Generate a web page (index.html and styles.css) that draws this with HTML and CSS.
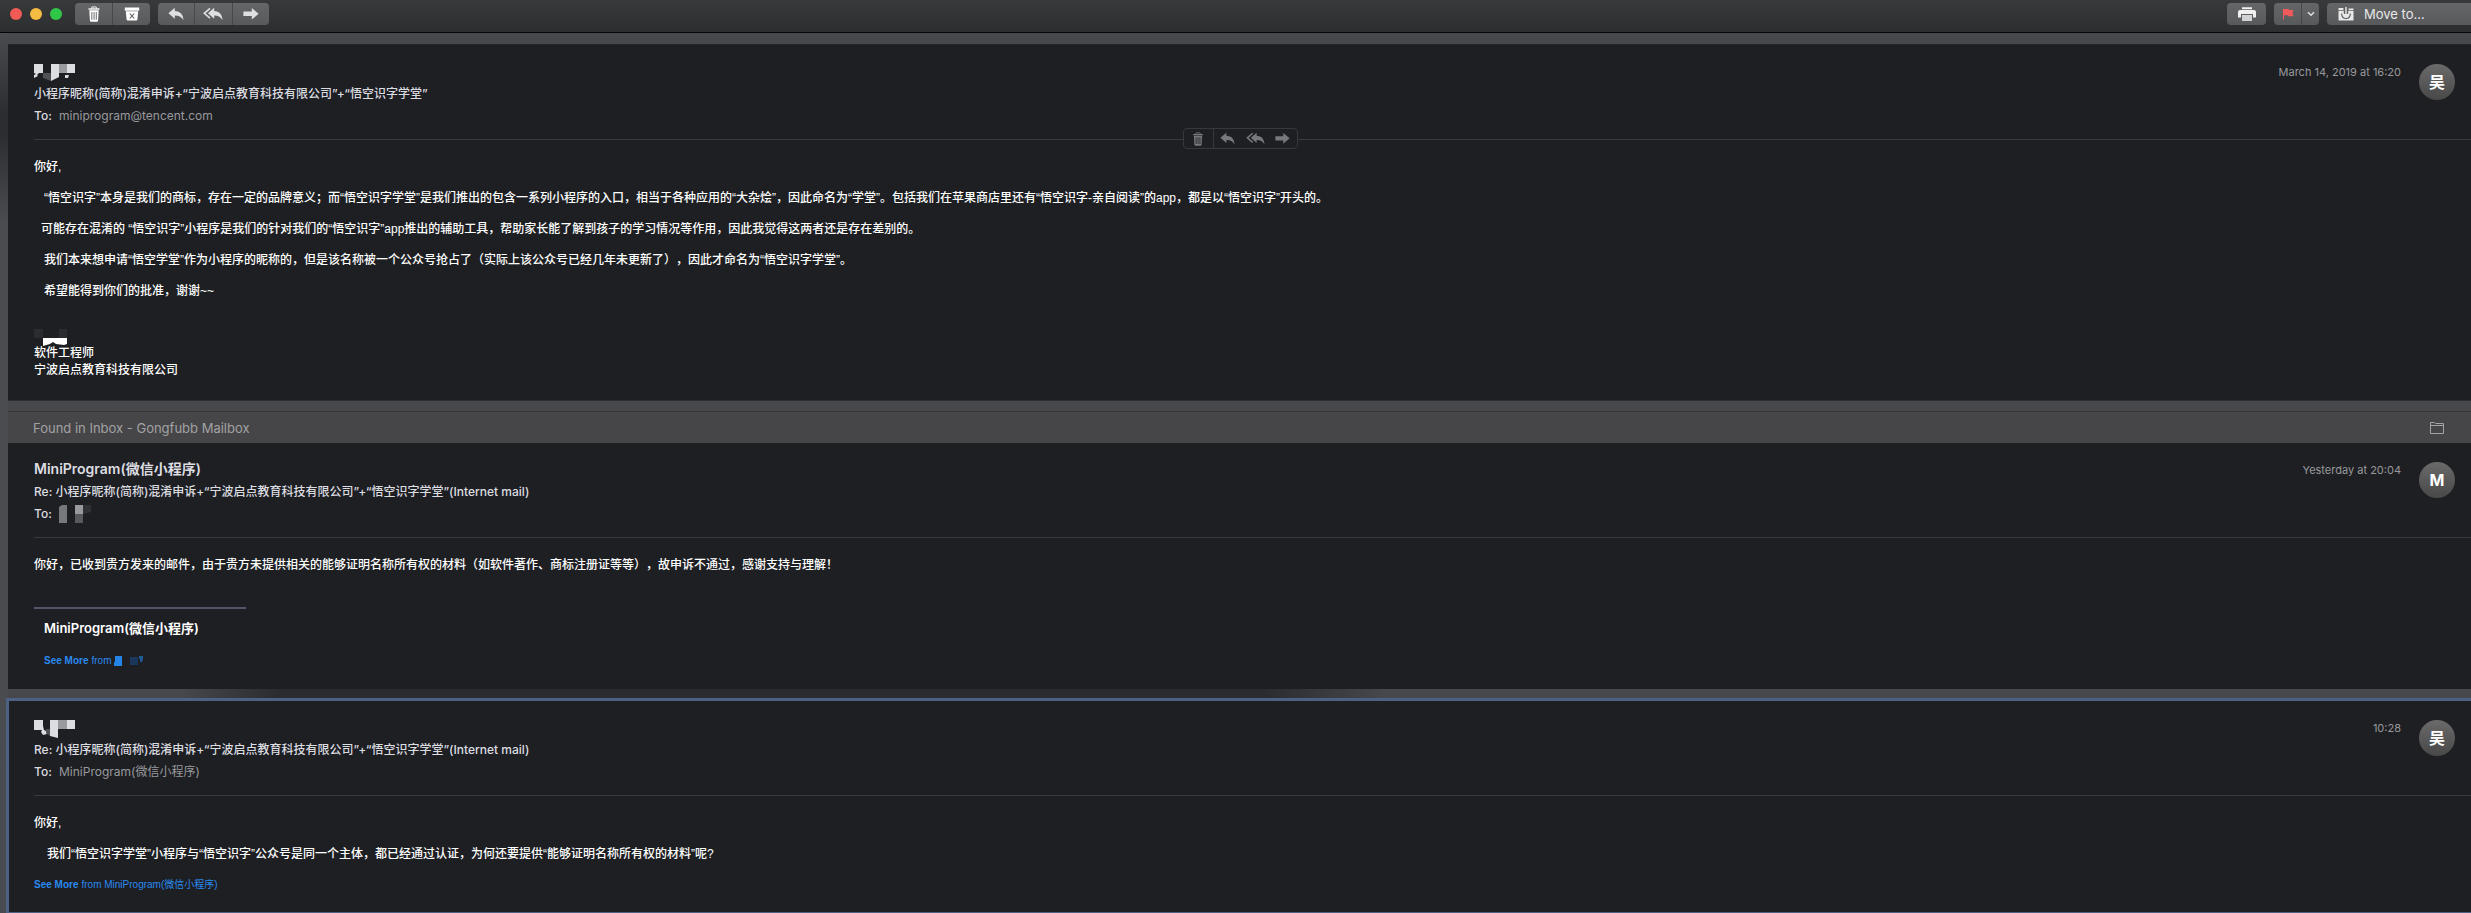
FILE: index.html
```html
<!DOCTYPE html>
<html lang="zh-CN">
<head>
  <meta charset="UTF-8">
  <meta name="viewport" content="width=device-width, initial-scale=1.0">
  <title>Mail</title>
  <link rel="stylesheet" href="styles.css">
</head>
<body>
  <!-- shared icons -->
  <svg class="icon-defs" aria-hidden="true">
    <symbol id="icon-trash" viewBox="0 0 16 16">
      <path d="M5.5 2.5V1.6Q5.5 1 6.1 1h3.8q.6 0 .6.6v.9" fill="none" stroke="currentColor"/>
      <path d="M2.5 2.3h11v1.4h-11z"/>
      <path fill-rule="evenodd" d="M3.3 4.3h9.4l-.6 10.2q-.1 1.2-1.3 1.2H5.200q-1.200 0-1.300-1.200zM5.400 6v7.700h.9V6zM7.600 6v7.700h.9V6zM9.800 6v7.700h.9V6z"/>
    </symbol>
    <symbol id="icon-junk" viewBox="0 0 16 16">
      <path d="M.8 1.500h14.400v3.200H.8z"/>
      <path d="M1.800 5.300h12.400l-.8 8.200q-.1 1-1.100 1H3.700q-1 0-1.100-1z"/>
      <path d="M5.800 7.500l4.400 5M10.200 7.500l-4.400 5" fill="none" stroke="#58595b" stroke-width="1.100"/>
    </symbol>
    <symbol id="icon-reply" viewBox="0 0 16 16">
      <path d="M6.800 1.800v3.200c5.400.3 8.300 3.200 8.700 9.300-1.700-3.200-4.300-4.600-8.700-4.700v3.200L.4 7.300z"/>
    </symbol>
    <symbol id="icon-reply-all" viewBox="0 0 20 16">
      <path d="M11.200 1.800v3.200c5.200.3 7.900 3.200 8.400 9.300-1.700-3.200-4.200-4.600-8.400-4.700v3.200L5 7.300z"/>
      <path d="M7 2.400L1.300 7.300 7 12.200" fill="none" stroke="currentColor" stroke-width="1.600"/>
    </symbol>
    <symbol id="icon-forward" viewBox="0 0 16 16">
      <path d="M.4 5.500h8.400V2l6.800 5.800-6.800 5.800v-3.600H.4z"/>
    </symbol>
  </svg>

  <header class="toolbar">
    <div class="lights">
      <span class="light red"></span>
      <span class="light yellow"></span>
      <span class="light green"></span>
    </div>
    <div class="btn-group delete-group">
      <button type="button" aria-label="Delete"><svg width="16" height="16"><use href="#icon-trash"/></svg></button>
      <button type="button" aria-label="Junk"><svg width="16" height="16"><use href="#icon-junk"/></svg></button>
    </div>
    <div class="btn-group reply-group">
      <button type="button" aria-label="Reply"><svg width="16" height="16"><use href="#icon-reply"/></svg></button>
      <button type="button" aria-label="Reply all"><svg width="20" height="16"><use href="#icon-reply-all"/></svg></button>
      <button type="button" aria-label="Forward"><svg width="16" height="16"><use href="#icon-forward"/></svg></button>
    </div>
    <div class="btn-group print-group">
      <button type="button" aria-label="Print">
        <svg width="18" height="16" viewBox="0 0 18 16">
          <path d="M4 1.200h10v2H4zM2 4h14q2 0 2 2v5.500h-3V8H3v3.500H0V6q0-2 2-2z"/>
          <path d="M4 9h10v6H4z" opacity=".8"/>
        </svg>
      </button>
    </div>
    <div class="btn-group flag-group">
      <button type="button" aria-label="Flag">
        <svg class="flag" width="12" height="12" viewBox="0 0 12 12">
          <path d="M1 1h5.500l.8 1H11.500L10.500 5l1 3.200H6.500l-.8-1H2V11.500H1z"/>
        </svg>
      </button>
      <button type="button" class="flag-menu" aria-label="Flag colours">
        <svg width="8" height="6" viewBox="0 0 8 6"><path d="M1 1.200l3 3 3-3" fill="none" stroke="currentColor" stroke-width="1.500"/></svg>
      </button>
    </div>
    <button type="button" class="move-to">
      <svg width="16" height="14" viewBox="0 0 16 14">
        <path d="M.5 1h5v2h-5zM10.500 1.500h5V3h-5zM.5 3.800h15V13.500H.5z"/>
        <path d="M5.800 0h4.400v7h-4.400z" fill="#5f6062"/>
        <path d="M3.600 6.500q.2 5 4.400 5t4.400-5" fill="none" stroke="#5f6062" stroke-width="1.200"/>
        <path d="M8 0v9.500M5.200 6.800L8 9.800l2.800-3" fill="none" stroke="currentColor" stroke-width="1.400"/>
      </svg>
      Move to...
    </button>
  </header>

  <main class="thread">
    <article class="message first">
      <div class="message-head">
        <div class="info">
          <div class="name">
            <svg width="42" height="18" viewBox="0 0 42 18" aria-label="Hidden name">
              <path fill="#dcdde0" d="M0 0h9v9H5l-2 2 1 1-4 2v-3l2-1-2-1zM17 0h8v13l-8 4zM33 0h8v9h-8zM31 11h4l-1 3h-3z"/>
              <path fill="#999a9d" d="M25 0h8v9h-8z"/>
              <path fill="#505155" d="M9 9h8v8l-8-3z"/>
            </svg>
          </div>
          <div class="subject">小程序昵称(简称)混淆申诉+“宁波启点教育科技有限公司”+“悟空识字学堂”</div>
          <div class="to"><span>To:</span>miniprogram@tencent.com</div>
        </div>
        <time class="date">March 14, 2019 at 16:20</time>
        <div class="avatar">吴</div>
        <div class="quick-actions">
          <button type="button" aria-label="Delete"><svg width="14" height="14"><use href="#icon-trash"/></svg></button>
          <button type="button" aria-label="Reply"><svg width="15" height="15"><use href="#icon-reply"/></svg></button>
          <button type="button" aria-label="Reply all"><svg width="19" height="15"><use href="#icon-reply-all"/></svg></button>
          <button type="button" aria-label="Forward"><svg width="15" height="15"><use href="#icon-forward"/></svg></button>
        </div>
      </div>
      <div class="message-body">
        <p>你好,</p>
        <p class="indent">“悟空识字”本身是我们的商标，存在一定的品牌意义；而“悟空识字学堂”是我们推出的包含一系列小程序的入口，相当于各种应用的“大杂烩”，因此命名为“学堂”。包括我们在苹果商店里还有“悟空识字-亲自阅读”的app，都是以“悟空识字”开头的。</p>
        <p class="indent-small">可能存在混淆的 “悟空识字”小程序是我们的针对我们的“悟空识字”app推出的辅助工具，帮助家长能了解到孩子的学习情况等作用，因此我觉得这两者还是存在差别的。</p>
        <p class="indent">我们本来想申请“悟空学堂”作为小程序的昵称的，但是该名称被一个公众号抢占了（实际上该公众号已经几年未更新了），因此才命名为“悟空识字学堂”。</p>
        <p class="indent">希望能得到你们的批准，谢谢~~</p>
        <div class="signature">
          <svg width="36" height="18" viewBox="0 0 36 18" aria-label="Hidden name">
            <path fill="#2b2c30" d="M0 0h9v9H0zM25 0h8v9h-8z"/>
            <path fill="#fff" d="M9 9h24v6l-3 1-8-1-3-2-3 2-7 2z"/>
          </svg>
          <div>软件工程师</div>
          <div>宁波启点教育科技有限公司</div>
        </div>
      </div>
    </article>

    <section class="found">
      <div class="found-bar">
        <span>Found in Inbox - Gongfubb Mailbox</span>
        <svg width="16" height="14" viewBox="0 0 16 14">
          <path d="M1.500 12.500v-11h4l1 1h8v10zM1.500 4.500h13" fill="none" stroke="currentColor"/>
        </svg>
      </div>
      <article class="message">
        <div class="message-head">
          <div class="info">
            <div class="name">MiniProgram(微信小程序)</div>
            <div class="subject">Re: 小程序昵称(简称)混淆申诉+“宁波启点教育科技有限公司”+“悟空识字学堂”(Internet mail)</div>
            <div class="to"><span>To:</span>
              <svg width="34" height="18" viewBox="0 0 34 18" aria-label="Hidden address">
                <path fill="#77787b" d="M0 2l3-2h5v18H0z"/>
                <path fill="#98999c" d="M16 0h8v9h-8z"/>
                <path fill="#58595d" d="M16 9h8v9h-8z"/>
                <path fill="#303135" d="M24 0h8v7l-8 2z"/>
              </svg>
            </div>
          </div>
          <time class="date">Yesterday at 20:04</time>
          <div class="avatar">M</div>
        </div>
        <div class="message-body">
          <p>你好，已收到贵方发来的邮件，由于贵方未提供相关的能够证明名称所有权的材料（如软件著作、商标注册证等等），故申诉不通过，感谢支持与理解！</p>
          <hr class="sig-line">
          <div class="sig-name">MiniProgram(微信小程序)</div>
          <a class="see-more indent" href="#"><b>See More</b> from
            <svg width="30" height="10" viewBox="0 0 30 10" aria-label="Hidden name">
              <path fill="#2585e6" d="M1 0h7v10H0V7l1-2z"/>
              <path fill="#1b375c" d="M16 1h8v8h-8z"/>
              <path fill="#205a97" d="M25 0h4v3l-1 3h-2V3h-1z"/>
            </svg>
          </a>
        </div>
      </article>
    </section>

    <article class="message selected">
      <div class="message-head">
        <div class="info">
          <div class="name">
            <svg width="42" height="18" viewBox="0 0 42 18" aria-label="Hidden name">
              <path fill="#dcdde0" d="M0 0h9v6l1 4 2 1 1 3-4 1-2-3 1-2H0zM16 0h8v18l-8-2zM33 0h8v9h-8z"/>
              <path fill="#999a9d" d="M24 0h9v9h-9z"/>
              <path fill="#505155" d="M12 9h4v7l-4-3z"/>
            </svg>
          </div>
          <div class="subject">Re: 小程序昵称(简称)混淆申诉+“宁波启点教育科技有限公司”+“悟空识字学堂”(Internet mail)</div>
          <div class="to"><span>To:</span>MiniProgram(微信小程序)</div>
        </div>
        <time class="date">10:28</time>
        <div class="avatar">吴</div>
      </div>
      <div class="message-body">
        <p>你好,</p>
        <p class="indent-large">我们“悟空识字学堂”小程序与“悟空识字”公众号是同一个主体，都已经通过认证，为何还要提供“能够证明名称所有权的材料”呢?</p>
        <a class="see-more" href="#"><b>See More</b> from MiniProgram(微信小程序)</a>
      </div>
    </article>
  </main>
</body>
</html>
```
FILE: styles.css
```css
* {
  box-sizing: border-box;
}

body {
  margin: 0;
  min-height: 100vh;
  display: flex;
  flex-direction: column;
  font-family: Inter, 'Noto Sans CJK SC', sans-serif;
  font-size: 12px;
  text-spacing-trim: space-all;
  color: #dcdde0;
  background: #46474b;
  overflow: hidden;
}

svg {
  display: block;
  fill: currentColor;
}

button {
  margin: 0;
  padding: 0;
  border: none;
  background: none;
  font: inherit;
  color: inherit;
}

.icon-defs {
  display: none;
}

/* Toolbar */
.toolbar {
  display: flex;
  align-items: flex-start;
  height: 33px;
  padding: 3px 0 0 10px;
  background: linear-gradient(to bottom, #38393b, #2d2e30);
  border-bottom: 1px solid #050506;
  overflow: hidden;
}

.lights {
  display: flex;
  gap: 8px;
  padding-top: 5px;
}

.light {
  width: 12px;
  height: 12px;
  border-radius: 50%;
}

.red {
  background: #f25a56;
}

.yellow {
  background: #f6bc42;
}

.green {
  background: #30c748;
}

.btn-group,
.move-to {
  display: flex;
  height: 22px;
  border-radius: 4px;
  background: linear-gradient(to bottom, #656668, #58595b);
  color: #dedfe1;
}

.btn-group button {
  display: flex;
  align-items: center;
  justify-content: center;
  flex: 1;
}

.btn-group button + button {
  border-left: 1px solid #47484a;
}

.delete-group {
  width: 75px;
  margin-left: 13px;
  color: #fff;
}

.reply-group {
  width: 111px;
  margin-left: 8px;
}

.print-group {
  width: 39px;
  margin-left: auto;
  color: #f0f0f1;
}

.flag-group {
  width: 45px;
  margin-left: 8px;
}

.flag-group .flag-menu {
  flex: none;
  width: 18px;
}

.flag {
  color: #f05a5b;
}

.move-to {
  align-items: center;
  gap: 10px;
  width: 144px;
  margin-left: 8px;
  padding-left: 11px;
  border-radius: 4px 0 0 4px;
  font-size: 13px;
  color: #e8e8e9;
}

/* Thread */
.thread {
  flex: 1;
  display: flex;
  flex-direction: column;
  padding: 11px 0 0 8px;
  background:
    linear-gradient(to bottom, #4a4b50 0, #2c2d30 80px, #2c2d30 100px, #4b4c50 190px, #494b50 100%) left / 8px 100% no-repeat,
    #47484c;
}

.message {
  background: #1e1f23;
}

.first {
  height: 357px;
  border-top: 1px solid #232428;
  border-bottom: 1px solid #2e2f32;
}

.message-head {
  position: relative;
  display: flex;
  align-items: flex-start;
  height: 95px;
  margin-left: 26px;
  padding: 16px 16px 0 0;
  border-bottom: 1px solid #393a3e;
}

.info {
  flex: 1;
}

.info > div {
  height: 22px;
  line-height: 22px;
}

.info .name {
  font-size: 14px;
  font-weight: 600;
  line-height: 20px;
}

.name svg {
  padding-top: 3px;
  height: 21px;
}

.subject {
  font-weight: 500;
}

.to {
  display: flex;
  align-items: center;
  color: #98999c;
}

.to span {
  width: 25px;
  font-weight: 500;
  color: #dcdde0;
}

.date {
  margin-right: 18px;
  font-size: 11px;
  line-height: 22px;
  color: #98999c;
}

.avatar {
  width: 36px;
  height: 36px;
  margin-top: 3px;
  border-radius: 50%;
  background: linear-gradient(to bottom, #6a6a6a, #484848);
  color: #fff;
  font-size: 16px;
  font-weight: 700;
  line-height: 36px;
  text-align: center;
}

.quick-actions {
  position: absolute;
  top: 83px;
  left: 50%;
  display: flex;
  width: 115px;
  height: 21px;
  margin-left: -70px;
  border: 1px solid #37383c;
  border-radius: 4px;
  background: #1e1f23;
  color: #77787b;
}

.quick-actions button {
  display: flex;
  align-items: center;
  justify-content: center;
  width: 28px;
}

.quick-actions button:first-child {
  width: 31px;
  border-right: 1px solid #37383c;
}

.message-body {
  padding: 12px 26px 0;
  font-family: 'Liberation Sans', 'Noto Sans CJK SC', sans-serif;
  font-weight: 500;
  color: #fff;
}

.message-body p {
  margin: 0;
  line-height: 31px;
}

.message-body .indent {
  padding-left: 10px;
}

.message-body .indent-small {
  padding-left: 7px;
}

.message-body .indent-large {
  padding-left: 13px;
}

.signature {
  margin-top: 22px;
  line-height: 17px;
}

.signature svg {
  margin-bottom: -2px;
}

/* Search result banner */
.found {
  margin-top: 10px;
  padding-bottom: 9px;
  background: linear-gradient(to right, #47484c 7%, #2b2c2f 11%, #2b2c2f 51%, #47484c 56%);
}

.found-bar {
  display: flex;
  align-items: center;
  justify-content: space-between;
  height: 32px;
  padding: 0 26px 0 25px;
  border-top: 1px solid #35363a;
  background: #464648;
  font-size: 13px;
  color: #a2a2a4;
}

.found .message {
  height: 246px;
}

.sig-line {
  width: 212px;
  height: 2px;
  margin: 26px 0 0;
  border: none;
  background: #50556a;
}

.sig-name {
  padding: 8px 0 0 10px;
  font-family: Inter, 'Noto Sans CJK SC', sans-serif;
  font-size: 13px;
  font-weight: 600;
  line-height: 22px;
}

.see-more {
  display: flex;
  align-items: center;
  gap: 3px;
  font-size: 10px;
  font-weight: 400;
  line-height: 30px;
  color: #2a8af0;
  text-decoration: none;
}

.sig-name + .see-more {
  margin-top: 7px;
}

.selected {
  flex: 1;
  margin-left: -2px;
  border: 3px solid #4c6184;
  border-right: none;
  border-bottom-width: 1px;
}

.selected .message-head {
  margin-left: 25px;
}

.selected .message-body {
  padding-left: 25px;
}
```
